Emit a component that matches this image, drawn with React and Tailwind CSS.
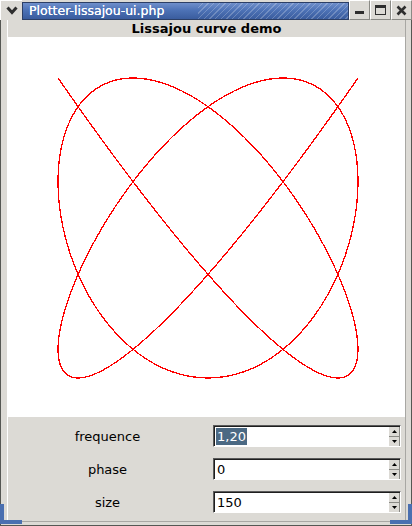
import React from "react";

// Lissajous curve: x = cos(t), y = cos(freq * t), t in [0, 5π]
function lissajouPoints(freq, phase, size, cx, cy) {
  const pts = [];
  const steps = 260;
  const end = 5 * Math.PI;
  for (let i = 0; i <= steps; i++) {
    const t = (end * i) / steps;
    const x = cx + size * Math.cos(t);
    const y = cy - size * Math.cos(freq * t + phase);
    pts.push(`${x.toFixed(2)},${y.toFixed(2)}`);
  }
  return pts.join(" ");
}

function SpinBox({ value, selected }) {
  return (
    <div className="flex h-[22px] w-[188px] border border-t-[#5a5a5a] border-l-[#5a5a5a] border-b-[#ffffff] border-r-[#ffffff] bg-white">
      <div className="flex flex-1 items-center border-t border-l border-[#1e1e1e] pl-[1px]">
        <span
          className={
            selected
              ? "bg-[#4b6983] px-[1px] text-[13px] leading-[17px] text-white"
              : "px-[1px] text-[13px] leading-[17px] text-black"
          }
        >
          {value}
        </span>
      </div>
      <div className="flex w-[11px] flex-col border-t border-[#1e1e1e] bg-[#dcdad5]">
        <div className="flex flex-1 items-center justify-center border-b border-r border-[#8a8a85] border-b-[#8a8a85]">
          <svg width="5" height="3" viewBox="0 0 5 3">
            <polygon points="2.5,0 5,3 0,3" fill="#000" />
          </svg>
        </div>
        <div className="flex flex-1 items-center justify-center border-r border-[#8a8a85]">
          <svg width="5" height="3" viewBox="0 0 5 3">
            <polygon points="0,0 5,0 2.5,3" fill="#000" />
          </svg>
        </div>
      </div>
    </div>
  );
}

function TitleButton({ children }) {
  return (
    <div className="flex h-[20px] w-[21px] items-center justify-center border border-t-white border-l-white border-b-[#8a8a85] border-r-[#8a8a85] bg-[#dcdad5]">
      {children}
    </div>
  );
}

export default function App() {
  const points = lissajouPoints(1.2, 0, 150, 200, 191);
  const rows = [
    { label: "frequence", value: "1,20", selected: true },
    { label: "phase", value: "0", selected: false },
    { label: "size", value: "150", selected: false },
  ];

  return (
    <div
      className="relative flex h-[526px] w-[412px] flex-col overflow-hidden bg-[#dcdad5]"
      style={{ fontFamily: '"DejaVu Sans", "Liberation Sans", sans-serif' }}
    >
      {/* title bar */}
      <div className="flex h-[20px] items-stretch">
        <div className="flex w-[22px] items-center justify-center border-l border-t border-white bg-[#dcdad5]">
          <svg width="12" height="9" viewBox="0 0 12 9">
            <polyline points="1.5,1.5 6,6.5 10.5,1.5" fill="none" stroke="#2e2e2e" strokeWidth="3" />
          </svg>
        </div>
        <div className="relative mt-[2px] flex flex-1 items-center overflow-hidden border border-[#2c3f66] bg-[linear-gradient(180deg,#6f8fcb_0%,#4d72b6_45%,#3a5c9e_100%)] pl-[6px]">
          <div className="absolute inset-y-0 right-0 w-[150px] bg-[repeating-linear-gradient(135deg,rgba(255,255,255,0)_0px,rgba(255,255,255,0)_3px,rgba(255,255,255,0.22)_3px,rgba(255,255,255,0.22)_4px)]" />
          <span className="relative text-[12.5px] font-medium leading-[14px] text-white [text-shadow:0_0_0.4px_#fff]">
            Plotter-lissajou-ui.php
          </span>
        </div>
        <TitleButton>
          <div className="mt-[5px] h-[3px] w-[9px] bg-[#2e2e2e]" />
        </TitleButton>
        <TitleButton>
          <div className="h-[10px] w-[11px] border border-t-[3px] border-[#2e2e2e]" />
        </TitleButton>
        <TitleButton>
          <svg width="11" height="11" viewBox="0 0 11 11">
            <path d="M1.5 1.5 L9.5 9.5 M9.5 1.5 L1.5 9.5" stroke="#2e2e2e" strokeWidth="2.6" />
          </svg>
        </TitleButton>
      </div>

      {/* window body */}
      <div className="flex flex-1 flex-col border-l border-r border-[#555753] pl-[6px] pr-[5px]">
        <div className="flex flex-1 flex-col border-l border-r border-l-white border-r-[#a8a7a3]">
          <div className="flex h-[17px] items-center justify-center text-[13px] font-bold leading-[16px] text-black">
            Lissajou curve demo
          </div>
          <div className="h-[380px] bg-white">
            <svg width="398" height="380" viewBox="0 0 398 380" className="block">
              <polyline
                points={points}
                fill="none"
                stroke="#ff0000"
                strokeWidth="1.3"
                shapeRendering="crispEdges"
              />
            </svg>
          </div>
          <div className="flex flex-col gap-[11px] pt-[8px] pb-[7px]">
            {rows.map((r) => (
              <div key={r.label} className="flex h-[22px] items-center">
                <div className="w-[199px] pt-[1px] text-center text-[13px] text-black">{r.label}</div>
                <div className="ml-[6px]">
                  <SpinBox value={r.value} selected={r.selected} />
                </div>
              </div>
            ))}
          </div>
        </div>
      </div>
      <div className="h-[5px] border border-t-[#a8a7a3] border-[#555753] bg-[#dcdad5]" />

      {/* resize grips */}
      <div className="absolute bottom-[2px] left-0 h-[20px] w-[4px] bg-[#4a6fb0]" />
      <div className="absolute bottom-[2px] left-0 h-[4px] w-[22px] bg-[#4a6fb0]" />
      <div className="absolute bottom-[2px] right-0 h-[20px] w-[4px] bg-[#4a6fb0]" />
      <div className="absolute bottom-[2px] right-0 h-[4px] w-[22px] bg-[#4a6fb0]" />
    </div>
  );
}
